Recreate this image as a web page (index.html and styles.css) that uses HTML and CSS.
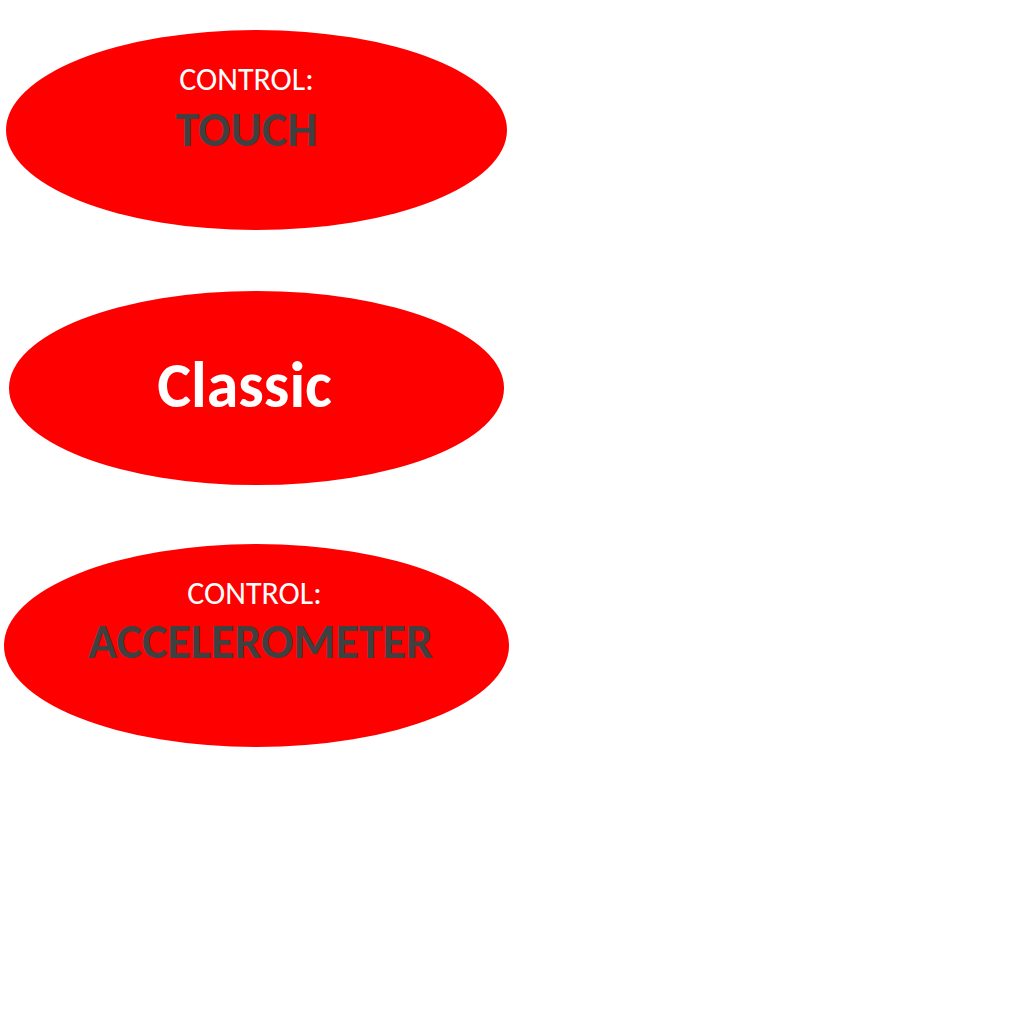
FILE: index.html
```html
<!DOCTYPE html>
<html lang="en">
<head>
<meta charset="utf-8">
<meta name="viewport" content="width=device-width, initial-scale=1">
<title>Controls</title>
<link rel="stylesheet" href="styles.css">
</head>
<body>
<main class="menu">
  <button type="button" class="oval touch">
    <span class="label">CONTROL:</span>
    <strong class="value">TOUCH</strong>
  </button>
  <button type="button" class="oval classic">
    <strong class="mode">Classic</strong>
  </button>
  <button type="button" class="oval accelerometer">
    <span class="label">CONTROL:</span>
    <strong class="value">ACCELEROMETER</strong>
  </button>
</main>
</body>
</html>
```

FILE: styles.css
```css
* {
  box-sizing: border-box;
}

body {
  margin: 0;
  background: #fff;
  font-family: Carlito, Calibri, Lato, "Open Sans", sans-serif;
}

.menu {
  display: flex;
  flex-direction: column;
  align-items: center;
  width: 50%;
  min-width: 512px;
  padding: 30px 0 0 1px;
}

.oval {
  display: flex;
  flex-direction: column;
  align-items: center;
  border: 0;
  border-radius: 50%;
  background: #f00;
  color: #fff;
  font-family: inherit;
  cursor: pointer;
}

.touch {
  width: 98%;
  min-height: 200px;
  padding: 32px 20px 0 0;
}

.classic {
  width: 97%;
  min-height: 194px;
  margin: 61px 0 59px;
  padding: 58px 24px 0 0;
}

.accelerometer {
  width: 99%;
  min-height: 203px;
  padding: 32px 4px 0 0;
}

.label {
  font-size: 32px;
  line-height: 36px;
}

.value {
  color: #404040;
  font-size: 48px;
  line-height: 64px;
}

.accelerometer .value {
  padding-left: 12px;
  line-height: 60px;
}

.mode {
  font-size: 64px;
  line-height: 72px;
}
```
